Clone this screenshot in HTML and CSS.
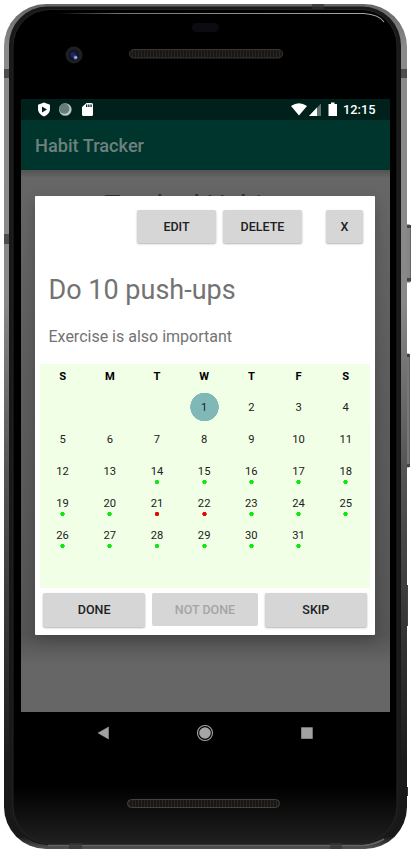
FILE: index.html
```html
<!DOCTYPE html>
<html lang="en">
<head>
<meta charset="utf-8">
<title>Habit Tracker</title>
<link rel="stylesheet" href="styles.css">
</head>
<body>
<div class="stage">
  <svg class="frame" width="412" height="852" viewBox="0 0 412 852" aria-hidden="true">
    <defs>
      <linearGradient id="metal" x1="0" y1="0" x2="0" y2="1">
        <stop offset="0" stop-color="#666"/><stop offset=".05" stop-color="#8a8a8a"/><stop offset=".35" stop-color="#888"/>
        <stop offset=".55" stop-color="#555"/><stop offset=".75" stop-color="#333"/><stop offset=".9" stop-color="#1a1a1a"/><stop offset=".985" stop-color="#181818"/><stop offset="1" stop-color="#555"/>
      </linearGradient>
      <linearGradient id="glass" x1="0" y1="0" x2="0" y2="1">
        <stop offset="0" stop-color="#000"/><stop offset=".93" stop-color="#000"/><stop offset="1" stop-color="#202020"/>
      </linearGradient>
      <linearGradient id="shine" gradientUnits="userSpaceOnUse" x1="58" y1="0" x2="384" y2="0"><stop offset="0" stop-color="#888" stop-opacity="0"/><stop offset=".2" stop-color="#777"/><stop offset="1" stop-color="#aaa"/></linearGradient>
      <pattern id="mesh" width="3" height="12" patternUnits="userSpaceOnUse"><rect width="3" height="12" fill="#191715"/><rect width="1" height="12" fill="#292623"/></pattern>
    </defs>
    <rect x="405" y="225" width="5.500" height="57" rx="1" fill="#858585" stroke="#666"/>
    <rect x="405" y="354" width="4.500" height="113" rx="1" fill="#777" stroke="#666"/>
    <path d="M407 225h4v3h-4zM407 278h4v3h-4zM407 354h3v3h-3zM407 464h3v3h-3z" fill="#444"/>
    <rect x="405" y="585" width="3" height="41" fill="#444"/>
    <rect x="405" y="787" width="3" height="9" fill="#333"/>
    <path d="M46 4H364A43 43 0 0 1 407 47V807A42 42 0 0 1 365 849H46A42 42 0 0 1 4 807V46A42 42 0 0 1 46 4Z" fill="url(#metal)"/>
    <path d="M47 6.500H362A39 39 0 0 1 401 46V806A39 39 0 0 1 362 845H48A39 39 0 0 1 9 806V45A38.500 38.500 0 0 1 47 6.500Z" fill="#191919"/>
    <path d="M50 9.500H361A36 36 0 0 1 397 45.500V806A38 38 0 0 1 359 844H51A38 38 0 0 1 13 806V46.500A37 37 0 0 1 50 9.500Z" fill="url(#glass)" stroke="#242424"/>
    <path d="M58 13.500H364Q379 14.500 384 22" fill="none" stroke="url(#shine)" stroke-width="1.200"/>
    <path d="M48 845.500H364Q376 844 384 839" fill="none" stroke="#66646a" stroke-width="1.500"/>
    <path d="M4 69h5v9H4zM401 69h6v9h-6zM4 234h5v10H4zM312 4h12v5h-12zM69 843h13v6H69zM330 843h12v6h-12z" fill="#333" opacity=".7"/>
    <rect x="192" y="23" width="27" height="9" rx="4.500" fill="#0c0b12"/>
    <circle cx="74" cy="55" r="8.500" fill="#201f1f"/><circle cx="74" cy="55" r="5.500" fill="#10142c"/><circle cx="73" cy="54.500" r="2.500" fill="#1b2860"/><circle cx="75.500" cy="57.500" r="2" fill="#7180bc"/><circle cx="76" cy="57.500" r=".8" fill="#d4d9ef"/>
    <rect x="129.500" y="49.500" width="153" height="8.500" rx="4.250" fill="url(#mesh)" stroke="#3b3632"/>
    <rect x="127.500" y="799.500" width="152" height="8" rx="4" fill="url(#mesh)" stroke="#46433d"/>
  </svg>

  <div class="screen">
    <header class="status">
      <svg class="notices" width="60" height="21" viewBox="0 0 60 21">
        <path d="M7 3.500L13 5.700V10.500Q12.500 15 7 17.500Q1.500 15 1 10.500V5.700Z" fill="#fff"/><path d="M5 7.500v6l5-3z" fill="#00201c"/>
        <circle cx="28.300" cy="10.500" r="6.300" fill="#b8c6c3"/><circle cx="27.300" cy="9.700" r="5.100" fill="#657d78"/>
        <path d="M49.500 4H54.500Q56 4 56 5.500V15.500Q56 17 54.500 17H46.500Q45 17 45 15.500V8Z" fill="#fff"/><path d="M49 5.500h1.300V8H49zM51.200 5.500h1.300V8h-1.300zM53.400 5.500h1.300V8h-1.300z" fill="#00201c"/>
      </svg>
      <svg class="signals" width="48" height="21" viewBox="0 0 48 21">
        <path d="M0 7Q8 1.500 16 7L8 16.500Z" fill="#fff"/>
        <path d="M30 4.500V17H18Z" fill="#5d716e"/><path d="M26 8.500V17H18Z" fill="#fff"/>
        <path d="M40 3.500h3.500v1.500h2.500v12h-8.500V5h2.500z" fill="#fff"/>
      </svg>
      <span class="clock">12:15</span>
    </header>
    <div class="appbar">Habit Tracker</div>
    <main class="content">
      <div class="behind">Tracked Habits</div>
      <section class="dialog">
        <div class="tools"><button class="btn edit">EDIT</button><button class="btn delete">DELETE</button><button class="btn close">X</button></div>
        <h1 class="title">Do 10 push-ups</h1>
        <p class="desc">Exercise is also important</p>
        <div class="calendar">
          <b>S</b><b>M</b><b>T</b><b>W</b><b>T</b><b>F</b><b>S</b>
          <span></span><span></span><span></span><span class="today">1</span><span>2</span><span>3</span><span>4</span>
          <span>5</span><span>6</span><span>7</span><span>8</span><span>9</span><span>10</span><span>11</span>
          <span>12</span><span>13</span><span class="done">14</span><span class="done">15</span><span class="done">16</span><span class="done">17</span><span class="done">18</span>
          <span class="done">19</span><span class="done">20</span><span class="missed">21</span><span class="missed">22</span><span class="done">23</span><span class="done">24</span><span class="done">25</span>
          <span class="done">26</span><span class="done">27</span><span class="done">28</span><span class="done">29</span><span class="done">30</span><span class="done">31</span><span></span>
        </div>
        <div class="actions"><button class="btn">DONE</button><button class="btn" disabled>NOT DONE</button><button class="btn">SKIP</button></div>
      </section>
    </main>
    <nav class="nav">
      <svg width="369" height="42" viewBox="0 0 369 42">
        <path d="M77 21L87.500 15V27Z" fill="#a2a2a2" stroke="#a2a2a2" stroke-width=".5"/>
        <circle cx="184" cy="21" r="7.500" fill="none" stroke="#a5a5a5" stroke-width="1.100"/><circle cx="184" cy="21" r="5.800" fill="#a5a5a5"/>
        <rect x="280.200" y="15.300" width="11.500" height="11.500" fill="#a2a2a2"/>
      </svg>
    </nav>
  </div>
</div>
</body>
</html>
```
FILE: styles.css
```css
* { box-sizing: border-box; }
body { margin: 0; background: #fff; font-family: Roboto, "Liberation Sans", sans-serif; overflow: hidden; }
.stage { position: relative; width: 412px; height: 852px; padding: 99px 22px 0 21px; }
.frame { position: absolute; left: 0; top: 0; }
.screen { position: relative; width: 369px; height: 655px; }
.status { height: 21px; background: #00201c; display: flex; align-items: center; padding: 0 14px 0 16px; color: #fff; }
.signals { margin-left: auto; }
.clock { width: 33px; margin-left: 4px; font-size: 12.8px; font-weight: 500; line-height: 22px; white-space: nowrap; }
.appbar { height: 50px; padding-left: 14px; background: #00352d; color: #6d817e; font-size: 18.2px; font-weight: 500; line-height: 52px; }
.content { height: 542px; background: linear-gradient(#535353, #666 8px, #5e5e5e 180px, #555 465px, #666 495px); overflow: hidden; }
.behind { height: 26px; padding: 21px 22px 0 0; text-align: center; font-size: 27px; line-height: 31px; color: #303030; white-space: nowrap; overflow: hidden; }
.dialog { position: relative; width: 340px; height: 439px; margin-left: 14px; padding: 14px 5px 0; background: #fff; border-radius: 1px; box-shadow: 0 6px 14px rgba(0,0,0,.2); }
.tools { display: flex; padding-left: 97px; }
.btn { height: 33px; padding: 0; border: 0; border-radius: 2px; background: #d6d6d6; color: #202020; box-shadow: 0 1px 2px rgba(0,0,0,.3); font: 500 12.5px/34px Roboto, sans-serif; }
.edit { width: 79px; }
.delete { width: 79px; margin-left: 7px; }
.close { width: 37px; margin-left: 24px; }
.title { margin: 29px 0 0 8.5px; color: #737373; font-size: 27px; font-weight: 400; line-height: 36px; }
.desc { margin: 19px 0 0 8.5px; color: #737373; font-size: 16px; line-height: 20px; }
.calendar { height: 224px; margin-top: 17px; background: #f1ffe6; display: grid; grid-template-columns: repeat(7, 47.2px); grid-template-rows: 27px repeat(5, 32px); color: #202020; font-size: 11.2px; }
.calendar b { position: relative; left: -1px; color: #000; font-weight: 700; line-height: 25px; text-align: center; }
.calendar span { position: relative; left: -1px; text-align: center; line-height: 33px; }
.calendar .today { background: radial-gradient(circle at 50% 50%, #80b8b8 14px, transparent 14.5px); }
.calendar .done { background: radial-gradient(circle at 50% 27px, #0ce810 1.9px, transparent 2.5px); }
.calendar .missed { background: radial-gradient(circle at 50% 27px, #e50a00 1.9px, transparent 2.5px); }
.actions { display: flex; gap: 7px; padding: 5px 3px 0; }
.actions .btn { width: 103px; height: 34px; }
.actions .btn:disabled { width: 106px; height: 33px; color: #a5a5a5; box-shadow: none; }
.nav { height: 42px; }
.nav svg { display: block; }
```
